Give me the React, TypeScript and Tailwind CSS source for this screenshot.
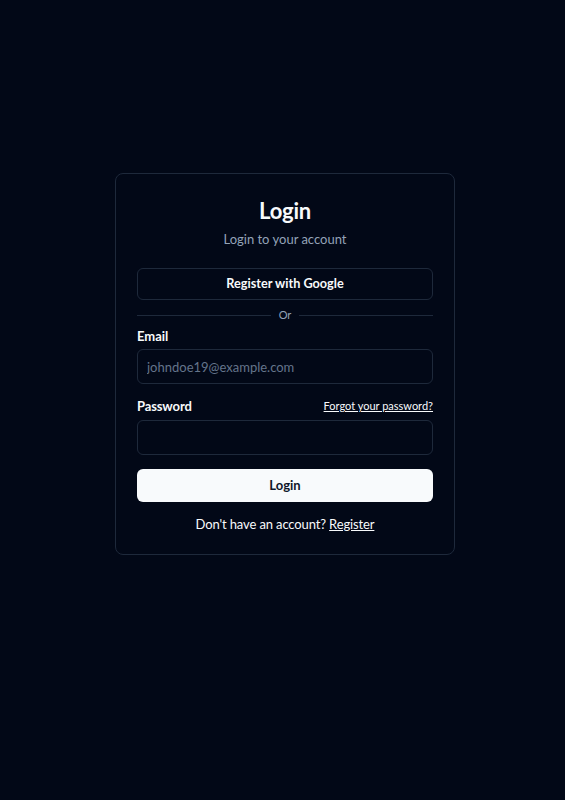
const Login = () => {
  return (
    <div className="min-h-screen bg-[#020817] pt-[173px] pl-[115px] font-['Lato',sans-serif] text-[#f8fafc]">
      <div className="w-[340px] rounded-lg border border-[#1e293b] bg-[#020817] px-[21px] pt-[21px] pb-[20px]">
        <div className="flex flex-col items-center">
          <h1 className="text-[22px] leading-8 font-bold tracking-[-0.01em]">Login</h1>
          <p className="mt-[2px] text-[13px] leading-5 text-[#94a3b8]">Login to your account</p>
        </div>

        <button className="mt-[19px] flex h-[32px] w-full items-center justify-center rounded-md border border-[#1e293b] text-[12.7px] font-bold">
          Register with Google
        </button>

        <div className="mt-[7px] flex items-center gap-2">
          <div className="h-px flex-1 bg-[#1e293b]" />
          <span className="text-[11px] leading-4 text-[#94a3b8]">Or</span>
          <div className="h-px flex-1 bg-[#1e293b]" />
        </div>

        <div className="mt-[3px] flex flex-col">
          <label htmlFor="email" className="text-[13px] leading-5 font-bold">
            Email
          </label>
          <input
            id="email"
            type="email"
            placeholder="johndoe19@example.com"
            className="mt-[3px] h-[35px] w-full rounded-md border border-[#1e293b] bg-transparent px-[9px] text-[13px] text-[#f8fafc] outline-none placeholder:text-[#64748b]"
          />
        </div>

        <div className="mt-[12px] flex flex-col">
          <div className="flex items-center justify-between">
            <label htmlFor="password" className="text-[13px] leading-5 font-bold tracking-[-0.01em]">
              Password
            </label>
            <a href="#" className="text-[11px] underline">
              Forgot your password?
            </a>
          </div>
          <input
            id="password"
            type="password"
            className="mt-[4px] h-[35px] w-full rounded-md border border-[#1e293b] bg-transparent px-[9px] text-[13px] text-[#f8fafc] outline-none"
          />
        </div>

        <button className="mt-[14px] flex h-[33px] w-full items-center justify-center rounded-md bg-[#f8fafc] text-[13px] font-bold text-[#0f172a]">
          Login
        </button>

        <p className="mt-[12px] text-center text-[13px] leading-5 tracking-[-0.01em]">
          Don't have an account?{" "}
          <a href="#" className="underline">
            Register
          </a>
        </p>
      </div>
    </div>
  );
};

export default Login;
